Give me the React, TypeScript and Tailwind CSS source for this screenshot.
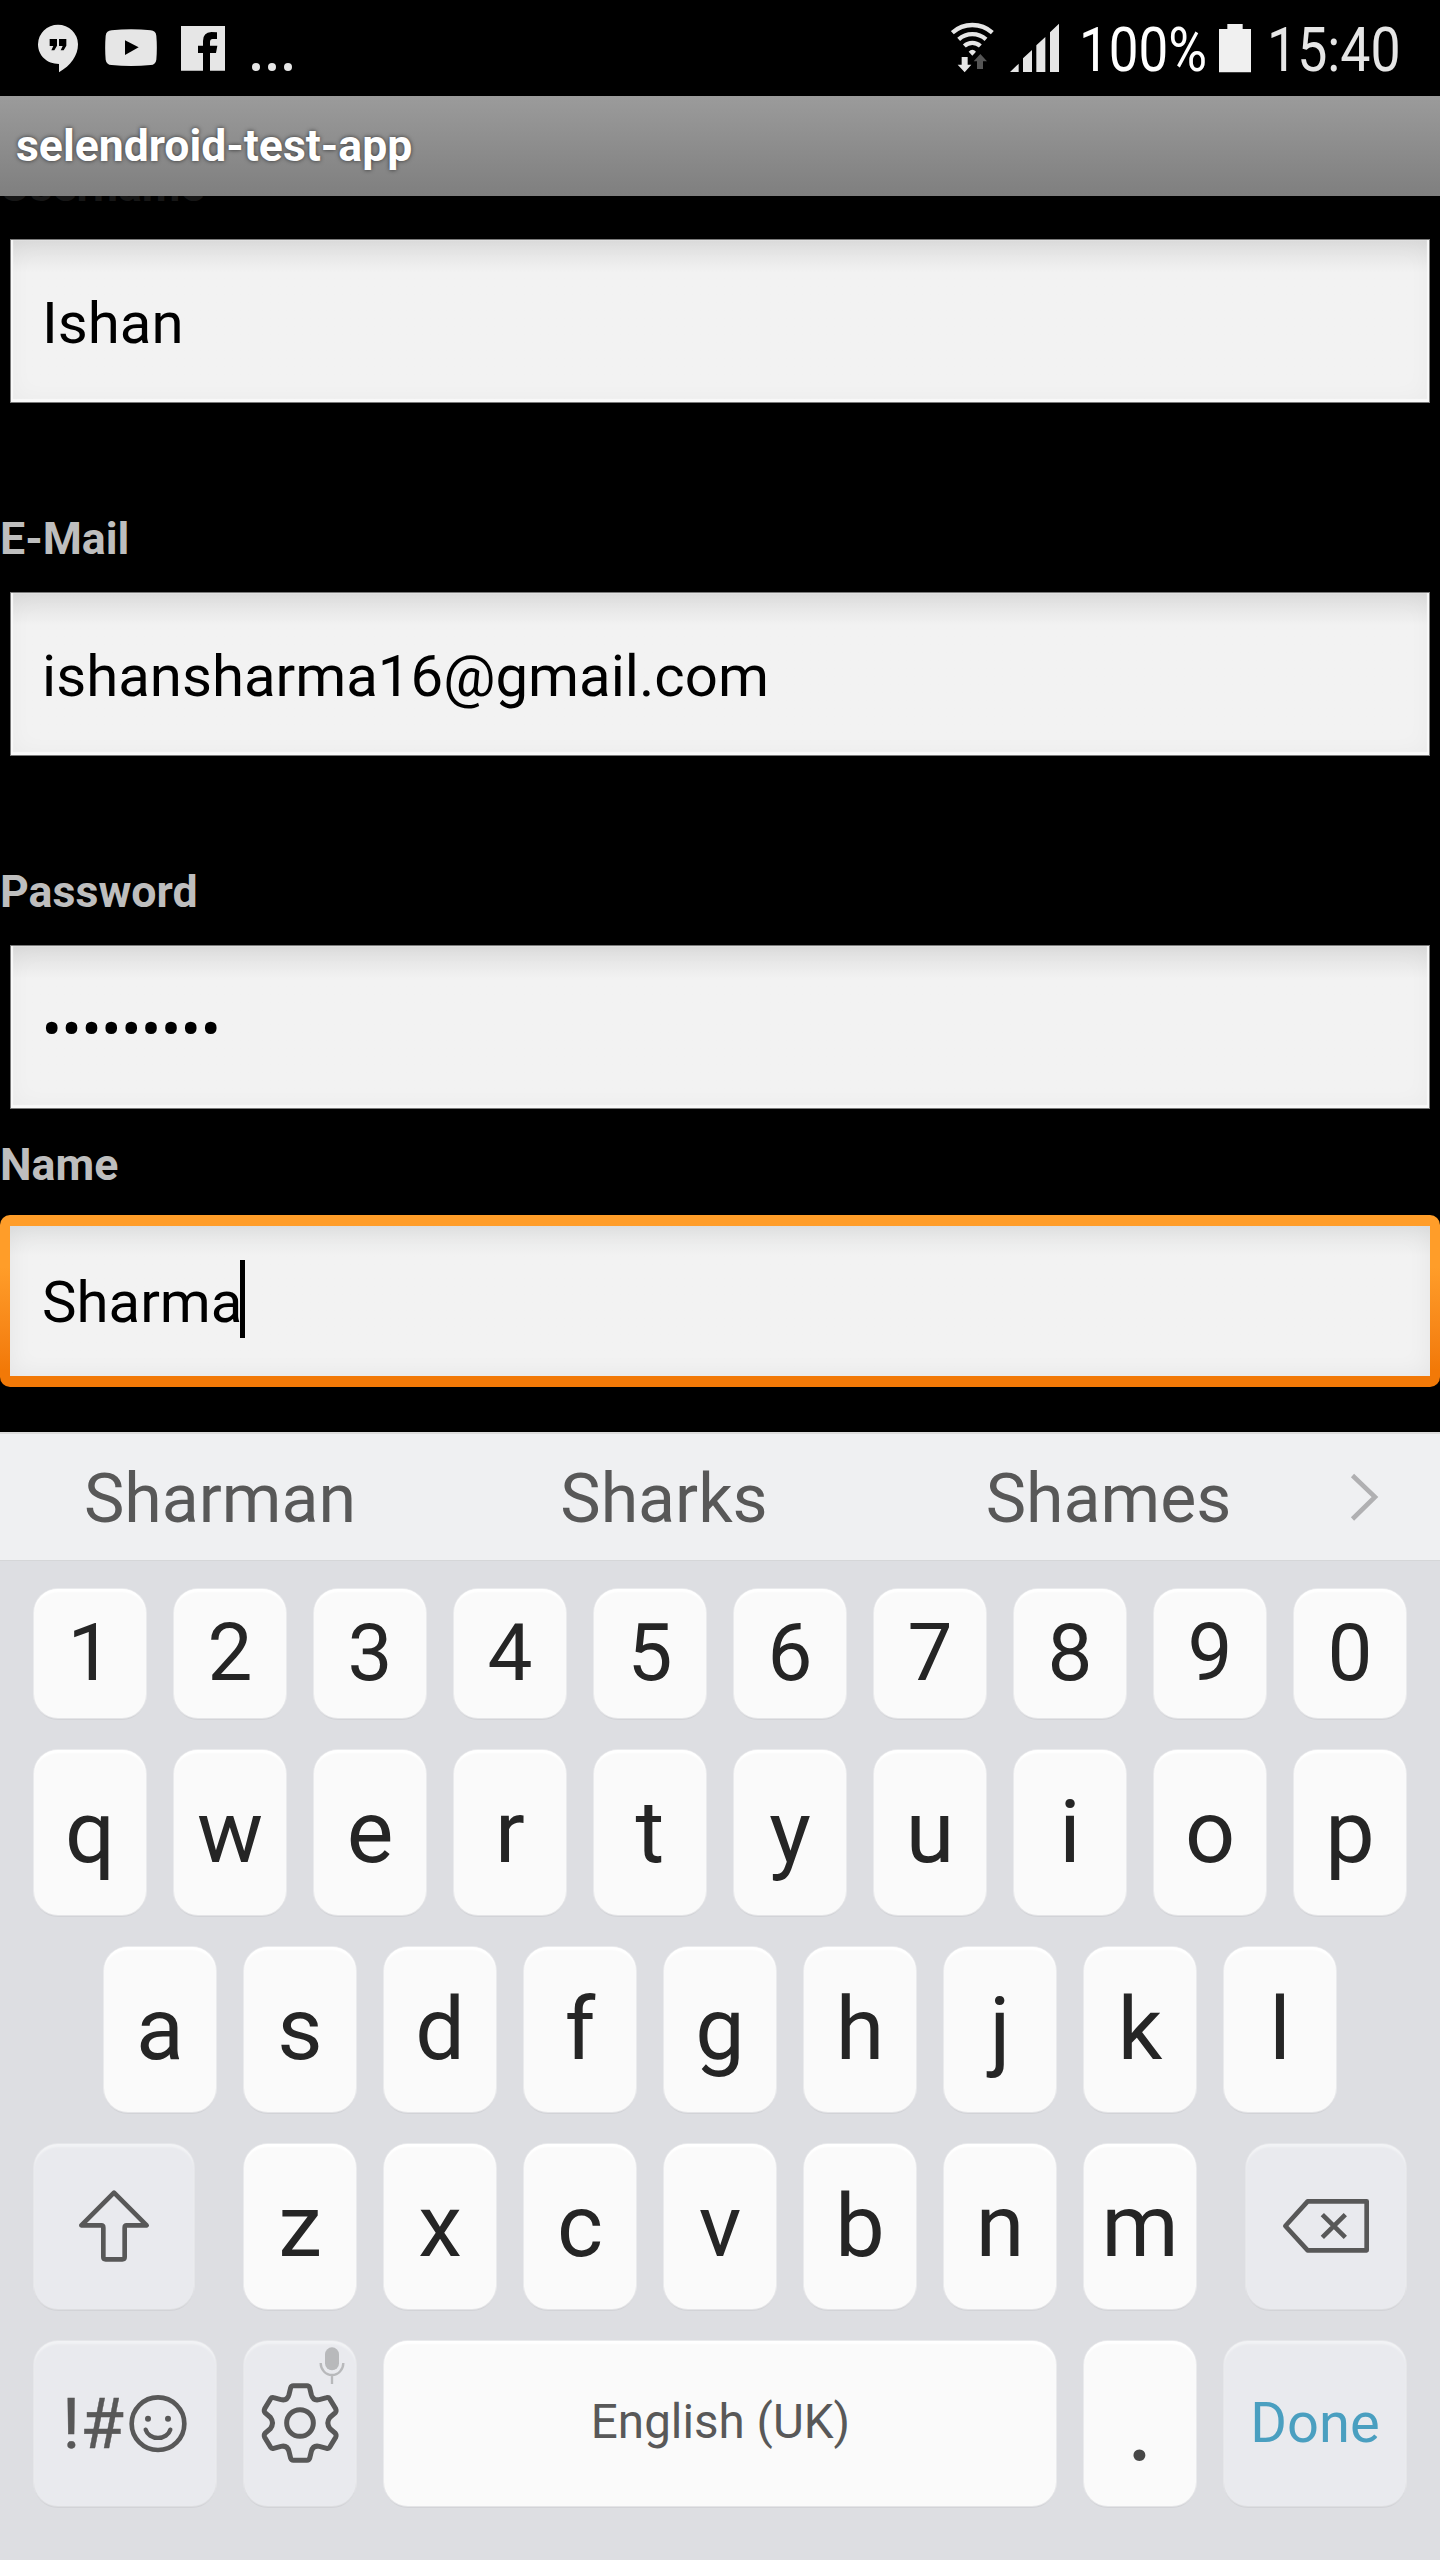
import React from "react";

const ROBOTO = "font-['Roboto',sans-serif]";

function StatusBar() {
  return (
    <div className="flex h-24 shrink-0 items-center bg-black pl-[38px] pr-[40px] text-[#e6e6e6]">
      <svg className="h-24 w-10" viewBox="114 0 120 288" fill="currentColor">
        <path d="M174 74a60 59 0 0 0-60 59c0 34 27 59 63 59v25c35-20 57-50 57-84a60 59 0 0 0-60-59Z" />
        <path d="M149 117h22v20l-8 14h-9l6-13h-11ZM177 117h22v20l-8 14h-9l6-13h-11Z" fill="#000" />
      </svg>
      <svg className="ml-[27px] h-24 w-[52px]" viewBox="315 0 156 288" fill="currentColor">
        <path d="M335 91Q393 85 452 91Q467 92 469 107Q472 143 469 179Q467 194 452 195Q393 201 335 195Q319 194 317 179Q314 143 317 107Q319 92 335 91Z" />
        <path d="M375 121L416 142L375 165Z" fill="#000" />
      </svg>
      <svg className="ml-6 h-24 w-11" viewBox="543 0 132 288" fill="currentColor">
        <path d="M543 78H676V212H630V159H648L652 137H630V126Q630 117 638 117H651V97Q645 96 634 96Q609 97 609 123V137H594V159H609V212H543Z" />
      </svg>
      <div className="ml-[27px] flex gap-2 pt-[37px]">
        <span className="size-2 rounded-full bg-[#e6e6e6]" />
        <span className="size-2 rounded-full bg-[#e6e6e6]" />
        <span className="size-2 rounded-full bg-[#e6e6e6]" />
      </div>
      <div className="flex-1" />
      <svg className="h-24 w-[43px]" viewBox="93 0 129 288">
        <g fill="none" stroke="#e6e6e6" strokeWidth="13">
          <path d="M97 98A90 90 0 0 1 217 98" />
          <path d="M116 118A62 62 0 0 1 198 118" />
          <path d="M133 138A36 36 0 0 1 181 138" />
        </g>
        <path d="M146 155Q157 144 168 155L157 167Z" fill="#e6e6e6" />
        <path d="M125 171H143V194H154L134 217L113 194H125Z" fill="#e6e6e6" />
        <path d="M171 207H189V184H201L181 162L161 184H171Z" fill="#555" />
      </svg>
      <svg className="ml-4 h-24 w-[49px]" viewBox="270 0 147 288" fill="#e6e6e6">
        <path d="M270 216L296 191V216ZM309 216V175L336 150V216ZM349 216V136L376 111V216ZM390 216V97L417 71V216Z" />
      </svg>
      <div className="ml-5 w-[130px] pt-1 text-[61px] leading-none text-white">
        <div className="w-max origin-left scale-x-[0.868]">100%</div>
      </div>
      <svg className="ml-[10px] h-24 w-8" viewBox="897 0 96 288" fill="#f0f0f0">
        <path d="M922 72H968V87H993V217H897V87H922Z" />
      </svg>
      <div className="ml-4 w-[133px] pt-1 text-[61px] leading-none">
        <div className="w-max origin-left scale-x-[0.88]">15:40</div>
      </div>
    </div>
  );
}

function Label({ children, className = "" }: { children: React.ReactNode; className?: string }) {
  return (
    <div className={`h-[53px] shrink-0 text-[44.7px] leading-[54px] font-bold text-[#bebebe] ${className}`}>
      {children}
    </div>
  );
}

function Field({ children, className = "" }: { children: React.ReactNode; className?: string }) {
  return (
    <div
      className={`mx-[10px] mt-[27px] flex h-[164px] shrink-0 items-center border border-[#7a7a7a] bg-linear-to-b from-[#dedede] via-[#f2f2f2] via-20% to-[#f2f2f2] pl-[31px] pt-[6px] text-[58.15px] text-black shadow-[inset_0_-3px_1px_#f9f9f9,inset_2px_0_1px_#f9f9f9,inset_-2px_0_1px_#f9f9f9,inset_0_0_24px_rgba(0,0,0,0.04)] ${className}`}
    >
      {children}
    </div>
  );
}

function Key({ children, fn = false, className = "" }: { children?: React.ReactNode; fn?: boolean; className?: string }) {
  const tone = fn
    ? "bg-[#e9eaee] shadow-[inset_0_4px_2px_-1px_#f2f3f5,0_0_0_1px_rgba(255,255,255,0.25),0_2px_0_#d2d3d7]"
    : "bg-[#fafafa] shadow-[inset_0_4px_2px_-1px_#ffffff,0_0_0_1px_rgba(255,255,255,0.4),0_2px_0_#d2d3d7]";
  return (
    <div className={`relative flex h-full shrink-0 items-center justify-center rounded-[24px] ${tone} ${className || "w-28"}`}>
      {children}
    </div>
  );
}

function Letters({ chars }: { chars: string }) {
  return (
    <>
      {chars.split("").map((c) => (
        <Key key={c}>
          <span className="pb-[2px]">{c}</span>
        </Key>
      ))}
    </>
  );
}

function Keyboard() {
  return (
    <div className="flex h-[1128px] shrink-0 flex-col bg-[#dddee2]">
      <div className="flex h-[129px] shrink-0 items-center border-t-2 border-b border-t-[#dcdcdc] border-b-[#d5d6d8] bg-[#eff0f2] pt-[3px] text-[68px] leading-none text-[#585858]">
        <div className="w-[440px] text-center">Sharman</div>
        <div className="w-[448px] text-center">Sharks</div>
        <div className="w-[441px] text-center">Shames</div>
        <svg className="-mt-1 ml-5 h-[50px] w-[30px]" viewBox="0 0 30 50" fill="none" stroke="#b0b0b2" strokeWidth="4.6">
          <path d="M3.500 3.500L26 25L3.500 47" />
        </svg>
      </div>
      <div className="flex flex-col gap-8 px-[34px] pt-7 text-[88px] leading-none text-[#252525]">
        <div className="flex h-[129px] gap-7 text-[80px]">
          <Letters chars="1234567890" />
        </div>
        <div className="flex h-[165px] gap-7">
          <Letters chars="qwertyuiop" />
        </div>
        <div className="flex h-[165px] justify-center gap-7">
          <Letters chars="asdfghjkl" />
        </div>
        <div className="flex h-[165px] justify-between">
          <Key fn className="w-40">
            <svg className="h-full w-full" viewBox="102 72 480 495" fill="none" stroke="#585858" strokeWidth="14" strokeLinejoin="round">
              <path d="M342 218L440 316H380Q374 316 374 323V411Q374 418 367 418H317Q310 418 310 411V323Q310 316 304 316H244Z" />
            </svg>
          </Key>
          <div className="flex gap-7">
            <Letters chars="zxcvbnm" />
          </div>
          <Key fn className="w-40">
            <svg className="h-full w-full" viewBox="858 72 480 495" fill="none" stroke="#585858" strokeWidth="14" strokeLinejoin="round">
              <path d="M1043 244H1220V391H1043L976 318Z" />
              <path d="M1087 284L1156 352M1156 284L1087 352" />
            </svg>
          </Key>
        </div>
        <div className="flex h-[165px] gap-7">
          <Key fn className="w-[182px]">
            <span className="-ml-px text-[71px] text-[#585858] [-webkit-text-stroke:0.4px_#585858]">!#</span>
            <svg className="ml-[5px] size-[58px]" viewBox="384 825 174 174" fill="none" stroke="#585858">
              <circle cx="471" cy="911" r="79" strokeWidth="14" />
              <circle cx="441" cy="896" r="9" fill="#585858" stroke="none" />
              <circle cx="501" cy="896" r="9" fill="#585858" stroke="none" />
              <path d="M434 929A38 32 0 0 0 508 929" strokeWidth="13" strokeLinecap="round" />
            </svg>
          </Key>
          <Key fn>
            <svg className="h-full w-full" viewBox="732 663 336 495" fill="none" stroke="#585858" strokeWidth="15">
              <path d="M880 797H921Q927 797 929 803L934 824Q939 843 958 839L980 833Q986 831 989 836L1007 866Q1010 873 1006 878L990 892Q977 909 990 926L1006 940Q1010 945 1007 952L989 982Q986 987 980 985L958 979Q939 975 934 994L929 1015Q927 1021 921 1021H880Q874 1021 872 1015L867 994Q862 975 843 979L821 985Q815 987 812 982L794 952Q791 945 795 940L811 926Q824 909 811 892L795 878Q791 873 794 866L812 836Q815 831 821 833L843 839Q862 843 867 824L872 803Q874 797 880 797Z" />
              <circle cx="900" cy="909" r="40" />
              <rect x="975" y="682" width="42" height="69" rx="21" fill="#b8b9bb" stroke="none" />
              <path d="M962 729A34 36 0 0 0 1030 729M996 765V792" stroke="#b8b9bb" strokeWidth="7" />
            </svg>
          </Key>
          <Key className="w-[672px]">
            <span className="pb-px pl-px text-[47.6px] text-[#585858]">English (UK)</span>
          </Key>
          <Key>
            <span className="text-[106px] text-[#474747]">.</span>
          </Key>
          <Key fn className="w-[182px]">
            <span className="pb-px text-[56px] text-[#4a9fc0]">Done</span>
          </Key>
        </div>
      </div>
    </div>
  );
}

export default function App() {
  return (
    <div className={`flex h-[2560px] w-[1440px] flex-col overflow-hidden bg-black ${ROBOTO}`}>
      <StatusBar />
      <div className="flex h-[100px] shrink-0 items-center bg-linear-to-b from-[#9b9b9b] to-[#7f7f7f] pl-4 text-[44.5px] leading-none font-bold text-white [text-shadow:0_0_4px_rgba(0,0,0,0.65)]">
        selendroid-test-app
      </div>
      <div className="flex h-[1236px] shrink-0 flex-col overflow-hidden">
        <Label className="-mt-[37px] text-[#161616]!">Username</Label>
        <Field>Ishan</Field>
        <Label className="mt-[109px]">E-Mail</Label>
        <Field>ishansharma16@gmail.com</Field>
        <Label className="mt-[109px]">Password</Label>
        <Field className="tracking-[0.25px]">•••••••••</Field>
        <Label className="mt-[29px]">Name</Label>
        <div className="mt-[24px] h-[172px] shrink-0 rounded-[10px] bg-linear-to-b from-[#ff9d29] from-30% to-[#f27907] to-90% px-[10px] py-[11px]">
          <div className="flex h-full items-center bg-linear-to-b from-[#e5e6e6] via-[#f2f2f2] via-20% to-[#f2f2f2] pl-8 text-[58.15px] text-black shadow-[inset_0_0_24px_rgba(0,0,0,0.06)]">
            <span className="pt-[3px]">Sharma</span>
            <span className="-mt-1 -ml-[2px] h-[78px] w-[5px] bg-black" />
          </div>
        </div>
      </div>
      <Keyboard />
    </div>
  );
}
